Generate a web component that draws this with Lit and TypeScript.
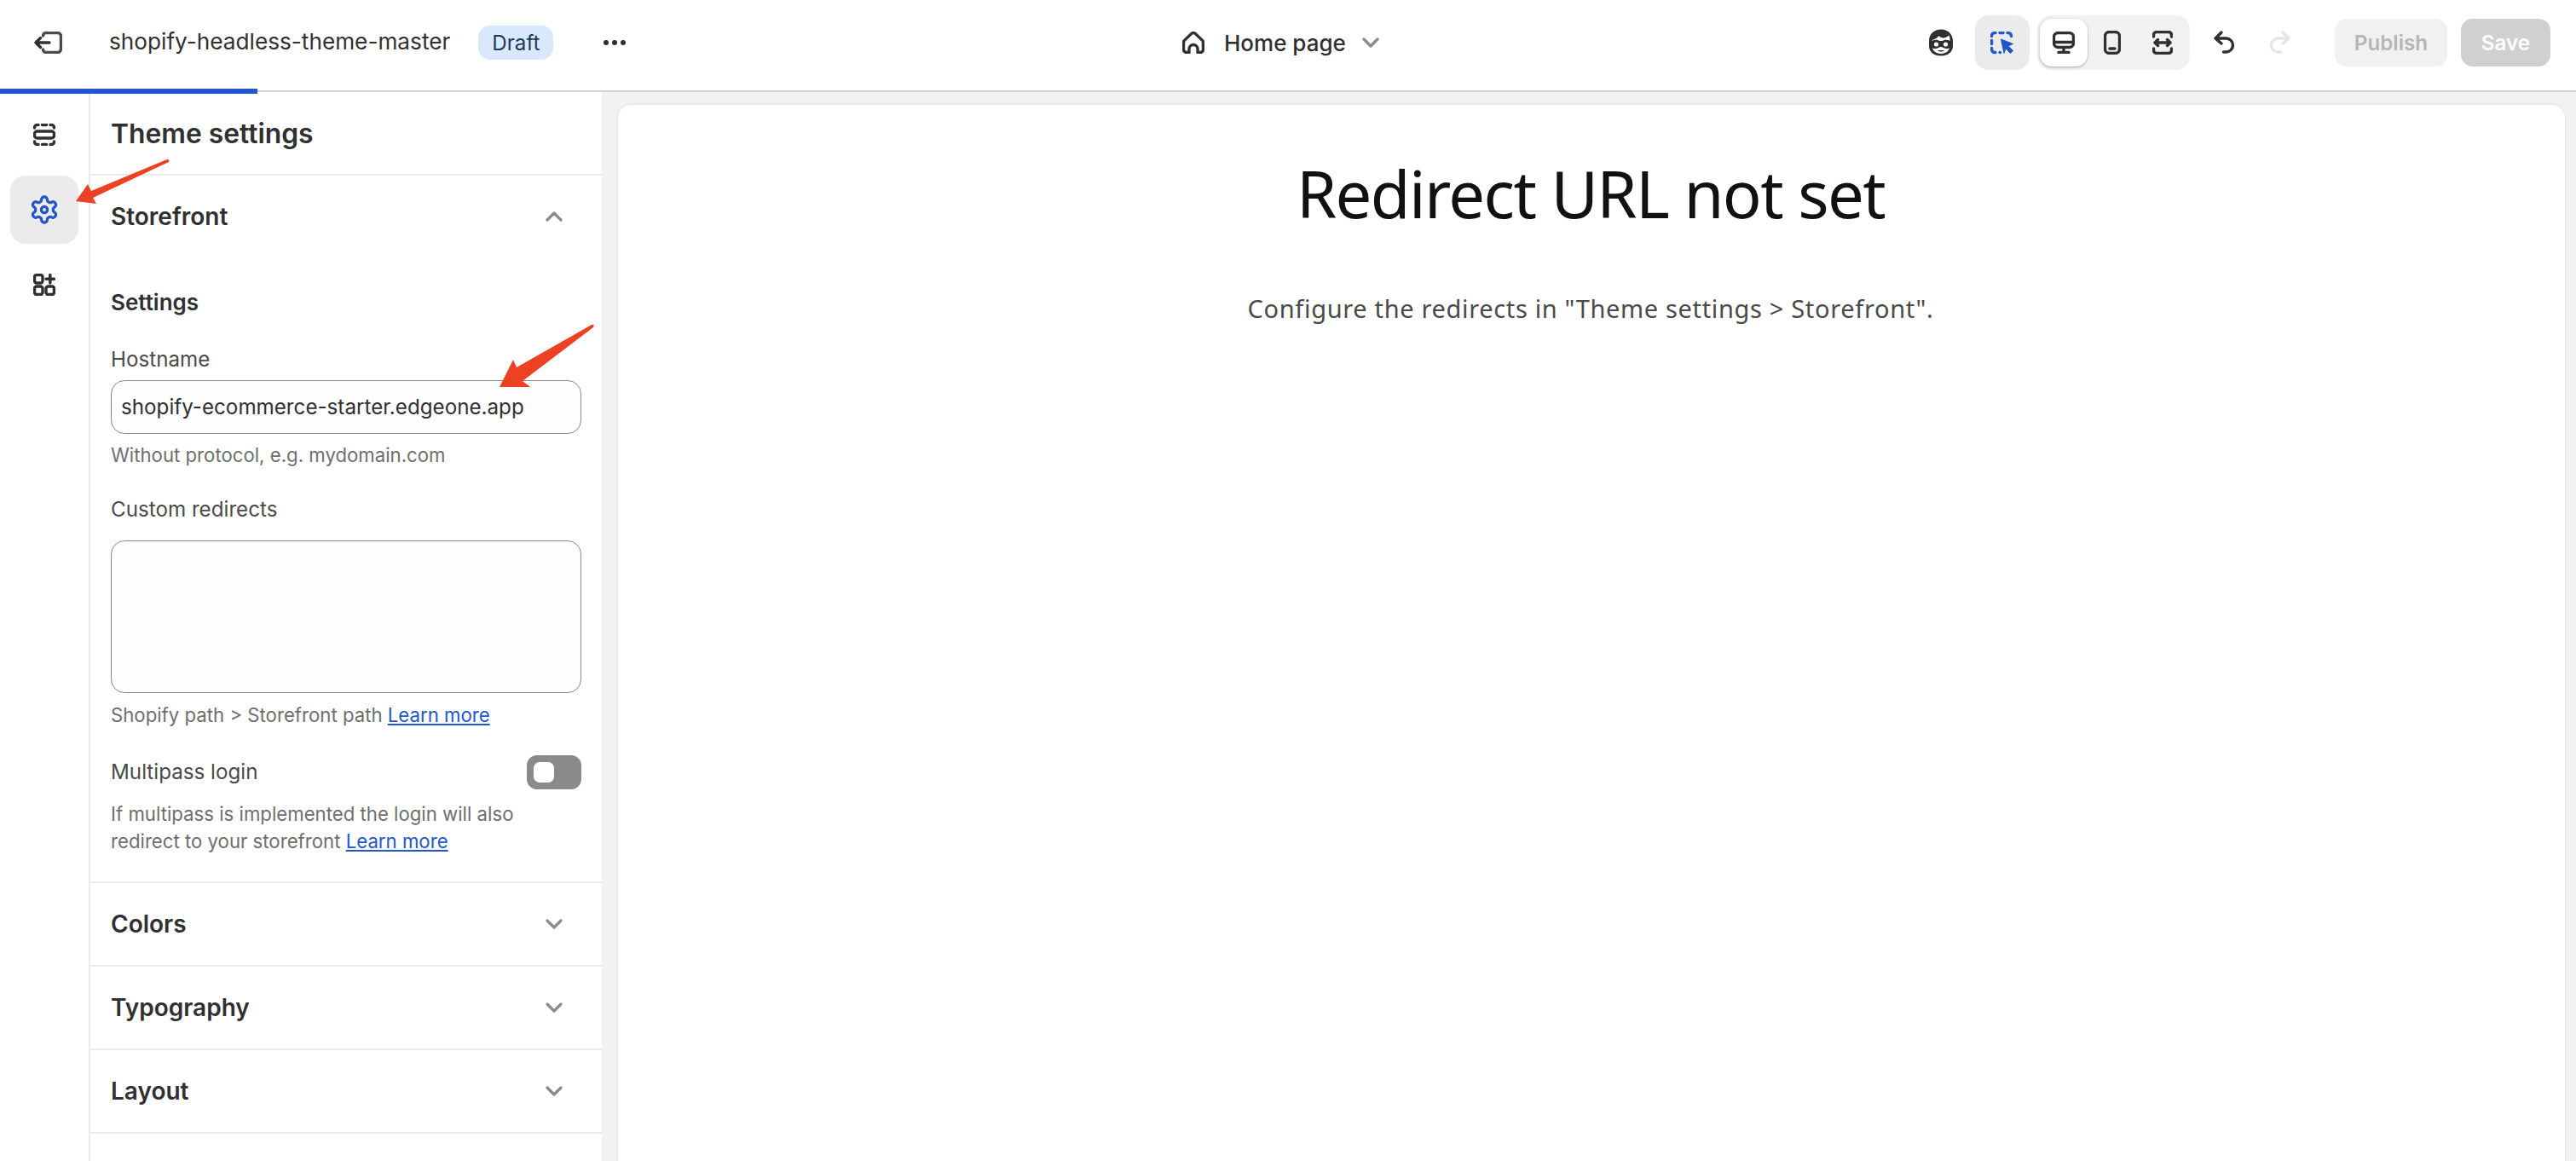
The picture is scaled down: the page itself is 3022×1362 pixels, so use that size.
import { LitElement, html, css, svg } from "lit";
import { customElement } from "lit/decorators.js";

const chevDown = html`<svg class="chev" width="20" height="12" viewBox="0 0 20 12"><path d="M2 2l8 8 8-8" fill="none" stroke="#8a8a8a" stroke-width="3.200" stroke-linecap="round" stroke-linejoin="round"/></svg>`;
const chevUp = html`<svg class="chev" width="20" height="12" viewBox="0 0 20 12"><path d="M2 10l8-8 8 8" fill="none" stroke="#8a8a8a" stroke-width="3.200" stroke-linecap="round" stroke-linejoin="round"/></svg>`;

const stroke = (w: number, h: number, body: unknown, color = "#303030", sw = 3.400) =>
  html`<svg width=${w} height=${h} viewBox="0 0 ${w} ${h}" fill="none" stroke=${color} stroke-width=${sw} stroke-linecap="round" stroke-linejoin="round">${body}</svg>`;

const exitIcon = stroke(33, 26, svg`<path d="M10.500 5V5A3.500 3.500 0 0 1 14 1.500H27.500a4 4 0 0 1 4 4v15a4 4 0 0 1-4 4H14a3.500 3.500 0 0 1-3.500-3.500" stroke="#4a4a4a"/><path d="M18 13H2M7.500 7.500L2 13l5.500 5.500"/>`);
const sectionsIcon = stroke(26, 26, svg`<rect x="1.500" y="9" width="23" height="8" rx="3"/><path d="M1.500 5V4.500a3 3 0 0 1 3-3H6M10.500 1.500h5M20 1.500h1.500a3 3 0 0 1 3 3V5M1.500 21v.5a3 3 0 0 0 3 3H6M10.500 24.500h5M20 24.500h1.500a3 3 0 0 0 3-3V21"/>`);
const gearIcon = html`<svg width="36" height="36" viewBox="0 0 24 24" fill="none" stroke="#2257cc" stroke-width="2.200" stroke-linecap="round" stroke-linejoin="round"><path d="M12.220 2h-.44a2 2 0 0 0-2 2v.18a2 2 0 0 1-1 1.730l-.43.25a2 2 0 0 1-2 0l-.15-.08a2 2 0 0 0-2.730.73l-.22.38a2 2 0 0 0 .73 2.730l.15.1a2 2 0 0 1 1 1.720v.51a2 2 0 0 1-1 1.740l-.15.09a2 2 0 0 0-.73 2.730l.22.38a2 2 0 0 0 2.730.73l.15-.08a2 2 0 0 1 2 0l.43.25a2 2 0 0 1 1 1.730V20a2 2 0 0 0 2 2h.44a2 2 0 0 0 2-2v-.18a2 2 0 0 1 1-1.730l.43-.25a2 2 0 0 1 2 0l.15.08a2 2 0 0 0 2.730-.73l.22-.39a2 2 0 0 0-.73-2.730l-.15-.08a2 2 0 0 1-1-1.740v-.5a2 2 0 0 1 1-1.740l.15-.09a2 2 0 0 0 .73-2.730l-.22-.38a2 2 0 0 0-2.730-.73l-.15.08a2 2 0 0 1-2 0l-.43-.25a2 2 0 0 1-1-1.730V4a2 2 0 0 0-2-2z"/><circle cx="12" cy="12" r="2.400"/></svg>`;
const appsIcon = stroke(26, 26, svg`<rect x="1.500" y="1.500" width="9.500" height="9.500" rx="2.500"/><rect x="1.500" y="15" width="9.500" height="9.500" rx="2.500"/><rect x="15" y="15" width="9.500" height="9.500" rx="2.500"/><path d="M19.800 1.500v9.500M15 6.200h9.500"/>`);
const homeIcon = stroke(26, 26, svg`<path d="M1.500 13a4 4 0 0 1 1-2.600l8-7.800a3.500 3.500 0 0 1 5 0l8 7.800a4 4 0 0 1 1 2.600v8a3.500 3.500 0 0 1-3.500 3.500H18v-4a5 5 0 0 0-10 0v4H5A3.500 3.500 0 0 1 1.500 21z"/>`);
const maskIcon = html`<svg width="30" height="32" viewBox="0 0 30 32"><path d="M15 .5C7 .5 1 6 1 14v6c0 7 6 11.500 14 11.500S29 27 29 20v-6C29 6 23 .5 15 .5z" fill="#303030"/><path d="M4.500 13c3-1 6-2 8-5 2 2.500 7 4 12-.5 1 2 1 4 1 6.500v6c0 5-4.500 9-10.500 9S4.500 25 4.500 20z" fill="#fff"/><path d="M2 15.500c3-3 9-3.500 11-1.500h4c2-2 8-1.500 11 1.500v3c0 3-3 4.500-6.500 4.500-3 0-4.500-2-6.500-2s-3.500 2-6.500 2C5 23 2 21.500 2 18.500z" fill="#303030"/><circle cx="9.500" cy="18" r="2.600" fill="#fff"/><circle cx="20.500" cy="18" r="2.600" fill="#fff"/><path d="M11 25c2 2 6 2 8 0z" fill="#303030"/></svg>`;
const selectIcon = html`<svg width="28" height="27" viewBox="0 0 28 27" fill="none"><path d="M1.500 5.500V5A3.500 3.500 0 0 1 5 1.500h1M11 1.500h4M20 1.500h1A3.500 3.500 0 0 1 24.500 5v.5M1.500 10.500v4M1.500 19.500V21A3.500 3.500 0 0 0 5 24.500h1M11 24.500h.5" stroke="#2257cc" stroke-width="3.400" stroke-linecap="round"/><path d="M12.500 9l14 5.500-5.500 2.500 5.500 5.500-3 3-5.500-5.500-2 5.500z" fill="#2257cc" stroke="#2257cc" stroke-linejoin="round"/></svg>`;
const desktopIcon = stroke(26, 26, svg`<rect x="1.500" y="1.500" width="23" height="17" rx="5"/><path d="M1.500 12.500h23M13 18.500v6M7 24.500h12"/>`);
const phoneIcon = stroke(20, 28, svg`<rect x="1.500" y="1.500" width="17" height="25" rx="5"/><path d="M7 21h6"/>`);
const fullIcon = stroke(24, 28, svg`<path d="M1.500 7V5A3.500 3.500 0 0 1 5 1.500h14A3.500 3.500 0 0 1 22.500 5v2M1.500 21v2A3.500 3.500 0 0 0 5 26.500h14a3.500 3.500 0 0 0 3.500-3.500v-2M3 14h18M6.500 10.500L3 14l3.500 3.500M17.500 10.500L21 14l-3.500 3.500"/>`);
const undoIcon = stroke(26, 28, svg`<path d="M9 2L2 9l7 6M2.500 9h12a8 8 0 0 1 8 8 8 8 0 0 1-8 8h-3"/>`);
const redoIcon = stroke(26, 28, svg`<path d="M17 2l7 7-7 6M23.500 9h-12a8 8 0 0 0-8 8 8 8 0 0 0 8 8h3"/>`, "#e6e6e6");

@customElement("app-root")
export class AppRoot extends LitElement {
  static styles = css`
    :host { display: block; width: 3022px; height: 1362px; overflow: hidden; position: relative; background: #fff; font-family: Inter, "Liberation Sans", sans-serif; color: #303030; }
    svg { display: block; flex: none; }
    .top { display: grid; grid-template-columns: 1387px auto 1fr; align-items: center; height: 108px; box-sizing: border-box; padding-bottom: 6px; border-bottom: 2px solid #d4d4d4; background: #fff; }
    .left { display: flex; align-items: center; padding-left: 40px; }
    .name { font-size: 26.200px; margin-left: 55px; margin-top: -3px; }
    .badge { margin-left: 33px; height: 40px; width: 88px; justify-content: center; border-radius: 14px; background: #d9e9fb; color: #1b3a5c; font-size: 24.200px; display: flex; align-items: center; }
    .dots { margin-left: 59px; display: flex; gap: 4px; }
    .dots i { width: 6px; height: 6px; border-radius: 50%; background: #303030; }
    .center { display: flex; align-items: center; }
    .center .page { margin-left: 23px; margin-right: 19px; font-size: 26px; font-weight: 500; }
    .right { display: flex; align-items: center; justify-content: flex-end; padding-right: 30px; }
    .selbtn { width: 64px; height: 64px; margin-left: 25px; border-radius: 16px; background: #ebebeb; display: flex; align-items: center; justify-content: center; }
    .seg { margin-left: 9px; width: 179px; height: 64px; box-sizing: border-box; padding: 0 3px; border-radius: 16px; background: #f1f1f1; display: flex; align-items: center; }
    .tile { width: 56px; height: 56px; border-radius: 14px; background: #fff; box-shadow: 0 1px 3px rgba(0,0,0,.3); display: flex; align-items: center; justify-content: center; }
    .seg .o { width: 59px; display: flex; justify-content: center; }
    .undo { margin-left: 28px; }
    .redo { margin-left: 38px; }
    .btn { height: 56px; border-radius: 14px; display: flex; align-items: center; justify-content: center; font-size: 24.200px; font-weight: 600; }
    .pub { width: 132px; margin-left: 52px; background: #f1f1f1; color: #b5b5b5; }
    .save { width: 105px; margin-left: 16px; background: #d0d0d0; color: #fff; }
    .main { display: flex; height: 1254px; }
    .rail { width: 104px; border-right: 2px solid #ebebeb; display: flex; flex-direction: column; align-items: center; padding-top: 18px; gap: 16px; flex: none; }
    .rbtn { width: 80px; height: 64px; display: flex; align-items: center; justify-content: center; border-radius: 18px; }
    .rbtn.on { height: 80px; background: #ebebeb; }
    .panel { width: 600px; flex: none; background: #fff; }
    .ph { height: 96px; padding: 0 24px; display: flex; align-items: center; font-size: 31.800px; font-weight: 600; border-bottom: 2px solid #ebebeb; }
    .acc { display: flex; align-items: center; justify-content: space-between; height: 96px; padding: 0 46px 0 24px; font-size: 28px; font-weight: 600; border-bottom: 2px solid #ebebeb; }
    .acc.open { border: none; }
    .body { padding: 37px 24px 31.500px; border-bottom: 2px solid #ebebeb; }
    .h { font-size: 26px; font-weight: 600; line-height: 32px; }
    .lbl { font-size: 24.200px; color: #4a4a4a; line-height: 32px; }
    .l1 { margin-top: 35px; }
    .l2 { margin-top: 31.500px; }
    .input { height: 63px; box-sizing: border-box; margin-top: 8px; border: 1.500px solid #8a8a8a; border-radius: 16px; background: #fdfdfd; padding: 0 11px; display: flex; align-items: center; font-size: 24.200px; color: #303030; }
    .ta { height: 179px; margin-top: 20.500px; }
    .help { font-size: 22.200px; color: #6e6e6e; line-height: 32px; }
    .help a { color: #2257cc; text-decoration: underline; }
    .h1 { margin-top: 9px; }
    .h2 { margin-top: 9.500px; }
    .h3 { margin-top: 12.500px; }
    .row { display: flex; align-items: center; justify-content: space-between; margin-top: 31.500px; }
    .toggle { width: 64px; height: 40px; border-radius: 12px; background: #8a8a8a; box-sizing: border-box; padding: 8px; }
    .toggle i { display: block; width: 24px; height: 24px; border-radius: 7px; background: #fff; }
    .gutter { flex: 1; background: #f1f1f1; padding: 14px 12px 0 18px; display: flex; min-width: 0; }
    .canvas { flex: 1; background: #fff; border-radius: 16px 16px 0 0; border: 1px solid #e3e3e3; border-bottom: none; display: flex; flex-direction: column; align-items: center; padding: 52px 2px 0 0; font-family: "Noto Sans", sans-serif; }
    .canvas h1 { margin: 0; font-weight: 400; font-size: 76px; line-height: 104px; color: #111; letter-spacing: -1.600px; }
    .canvas p { margin: 61px 0 0; font-size: 29px; line-height: 44px; color: #4a4a4a; letter-spacing: .66px; }
    .progress { position: absolute; left: 0; top: 104px; width: 302px; height: 6px; background: #2257cc; }
    .arrows { position: absolute; left: 0; top: 0; pointer-events: none; }
  `;

  render() {
    return html`
      <div class="top">
        <div class="left">
          ${exitIcon}
          <span class="name">shopify-headless-theme-master</span>
          <span class="badge">Draft</span>
          <span class="dots"><i></i><i></i><i></i></span>
        </div>
        <div class="center">
          ${homeIcon}
          <span class="page">Home page</span>
          ${chevDown}
        </div>
        <div class="right">
          ${maskIcon}
          <div class="selbtn">${selectIcon}</div>
          <div class="seg">
            <div class="tile">${desktopIcon}</div>
            <div class="o">${phoneIcon}</div>
            <div class="o">${fullIcon}</div>
          </div>
          <div class="undo">${undoIcon}</div>
          <div class="redo">${redoIcon}</div>
          <div class="btn pub">Publish</div>
          <div class="btn save">Save</div>
        </div>
      </div>
      <div class="main">
        <nav class="rail">
          <div class="rbtn">${sectionsIcon}</div>
          <div class="rbtn on">${gearIcon}</div>
          <div class="rbtn">${appsIcon}</div>
        </nav>
        <aside class="panel">
          <div class="ph">Theme settings</div>
          <div class="acc open"><span>Storefront</span>${chevUp}</div>
          <div class="body">
            <div class="h">Settings</div>
            <div class="lbl l1">Hostname</div>
            <div class="input">shopify-ecommerce-starter.edgeone.app</div>
            <div class="help h1">Without protocol, e.g. mydomain.com</div>
            <div class="lbl l2">Custom redirects</div>
            <div class="input ta"></div>
            <div class="help h2">Shopify path &gt; Storefront path <a>Learn more</a></div>
            <div class="row"><span class="lbl">Multipass login</span><span class="toggle"><i></i></span></div>
            <div class="help h3">If multipass is implemented the login will also<br>redirect to your storefront <a>Learn more</a></div>
          </div>
          <div class="acc"><span>Colors</span>${chevDown}</div>
          <div class="acc"><span>Typography</span>${chevDown}</div>
          <div class="acc"><span>Layout</span>${chevDown}</div>
        </aside>
        <div class="gutter">
          <div class="canvas">
            <h1>Redirect URL not set</h1>
            <p>Configure the redirects in "Theme settings &gt; Storefront".</p>
          </div>
        </div>
      </div>
      <div class="progress"></div>
      <svg class="arrows" width="720" height="470" viewBox="0 0 720 470">
        <path d="M89 236L103 216L107 224L196 187Q199 187 198 190L109 232L113 239Z" fill="#ec4125"/>
        <path d="M586 454L602 422L606 431L694 381Q698 380 696 384L613 447L622 454Z" fill="#ec4125"/>
      </svg>
    `;
  }
}
